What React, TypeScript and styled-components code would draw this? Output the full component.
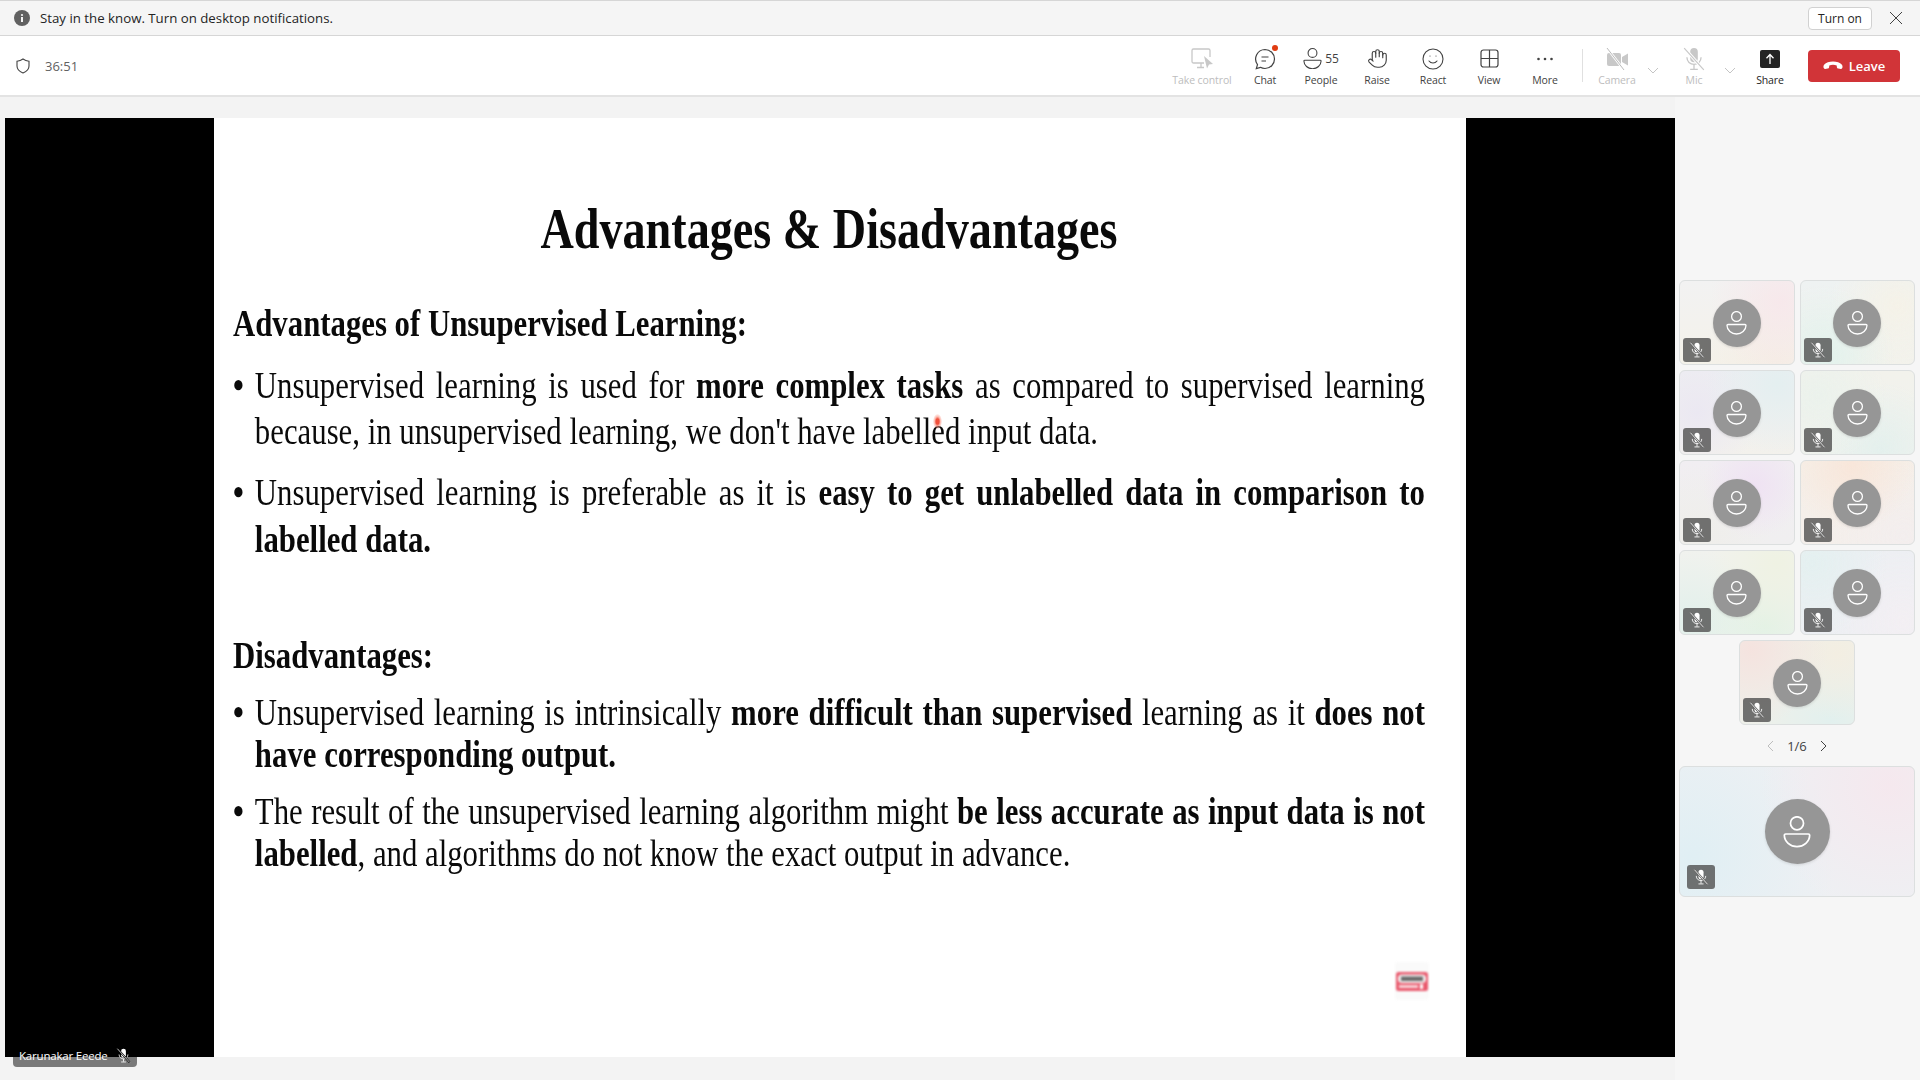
import React from 'react'
import styled, {createGlobalStyle} from 'styled-components'
import {Hand, Smile} from 'lucide-react'

const UI_FONT = `'Open Sans', 'Noto Sans', sans-serif`
const SLIDE_SCALE = 0.81

const GlobalStyle = createGlobalStyle`
  html, body {
    margin: 0;
    padding: 0;
    background: #f3f3f3;
  }
  * {
    box-sizing: border-box;
  }
`

const Page = styled.div`
  width: 1920px;
  height: 1080px;
  overflow: hidden;
  display: flex;
  flex-direction: column;
  background: #f3f3f3;
  font-family: ${UI_FONT};
  color: #242424;
`

const Banner = styled.div`
  height: 36px;
  flex: none;
  display: flex;
  align-items: center;
  padding: 0 17px 0 14px;
  border-top: 1px solid #d6d6d6;
  border-bottom: 1px solid #d6d6d6;
  background: #f5f5f5;
  font-size: 13.25px;
`

const BannerText = styled.span`
  flex: 1;
  margin-left: 10px;
`

const TurnOn = styled.button`
  width: 64px;
  height: 23px;
  padding: 0;
  border: 1px solid #d1d1d1;
  border-radius: 4px;
  background: #fff;
  font-family: ${UI_FONT};
  font-size: 12px;
  color: #242424;
`

const CloseButton = styled.span`
  display: flex;
  margin-left: 17px;
`

const Toolbar = styled.div`
  height: 61px;
  flex: none;
  display: flex;
  align-items: flex-start;
  padding-right: 20px;
  background: #fff;
  border-bottom: 2px solid #e3e3e3;
`

const Timer = styled.div`
  flex: 1;
  height: 59px;
  display: flex;
  align-items: center;
  gap: 14px;
  padding-left: 15px;
  font-size: 13px;
  color: #616161;
`

const Tool = styled.div<{$width?: number; $muted?: boolean}>`
  width: ${p => p.$width ?? 56}px;
  display: flex;
  flex-direction: column;
  align-items: center;
  padding-top: 9px;
  color: ${p => (p.$muted ? '#c4c4c4' : '#424242')};
`

const IconSlot = styled.div`
  height: 27px;
  display: flex;
  align-items: center;
  justify-content: center;
  gap: 3px;
  position: relative;
`

const Count = styled.span`
  font-size: 12px;
  color: #424242;
`

const ToolLabel = styled.span<{$muted?: boolean; $dark?: boolean}>`
  height: 16px;
  line-height: 16px;
  font-size: 10.5px;
  white-space: nowrap;
  letter-spacing: -0.1px;
  color: ${p => (p.$muted ? '#bdbdbd' : p.$dark ? '#242424' : '#424242')};
`

const RedDot = styled.span`
  position: absolute;
  top: 0;
  right: -2px;
  width: 6px;
  height: 6px;
  border-radius: 50%;
  background: #e03c12;
`

const Divider = styled.span`
  width: 1px;
  height: 33px;
  margin: 13px 6px 0 9px;
  background: #e0e0e0;
`

const Caret = styled.span<{$gap?: number}>`
  width: 16px;
  height: 59px;
  display: flex;
  align-items: center;
  justify-content: center;
  padding-top: 8px;
  margin-right: ${p => p.$gap ?? 0}px;
`

const LeaveButton = styled.div`
  width: 92px;
  height: 32px;
  margin: 14px 0 0 10px;
  display: flex;
  align-items: center;
  justify-content: center;
  gap: 6px;
  border-radius: 4px;
  background: #d13438;
  color: #fff;
  font-size: 13px;
  font-weight: 600;
`

const Stage = styled.div`
  flex: 1;
  display: flex;
  padding: 21px 0 0 5px;
`

const Slide = styled.div`
  position: relative;
  width: 1670px;
  height: 939px;
  flex: none;
  display: grid;
  grid-template-columns: 209px 1252px 209px;
  background: #000;
`

const SlideSheet = styled.div`
  position: relative;
  background: #fff;
  padding: 0 41px 0 19px;
  overflow: hidden;
`

const SlideBody = styled.div`
  width: ${1192 / SLIDE_SCALE}px;
  transform: scaleX(${SLIDE_SCALE});
  transform-origin: left top;
  font-family: 'Liberation Serif', 'Times New Roman', serif;
  color: #0a0a0a;
  filter: blur(0.35px);
`

const SlideTitle = styled.h1`
  margin: 0;
  padding-top: 81px;
  line-height: 60px;
  font-size: 57px;
  font-weight: 700;
  text-align: center;
`

const SlideHeading = styled.h2<{$top: number}>`
  margin: ${p => p.$top}px 0 0;
  line-height: 44px;
  font-size: 38px;
  font-weight: 700;
`

const Bullet = styled.div<{$top: number; $pitch: number}>`
  margin-top: ${p => p.$top}px;
  display: grid;
  grid-template-columns: 27px 1fr;
  font-size: 38px;
  line-height: ${p => p.$pitch}px;
`

const BulletDot = styled.span`
  font-weight: 700;
`

const Line = styled.div<{$fill?: boolean}>`
  white-space: nowrap;
  ${p => (p.$fill ? 'text-align: justify; text-align-last: justify; white-space: normal;' : '')}
`

const LaserDot = styled.span`
  position: absolute;
  left: 719px;
  top: 296px;
  width: 9px;
  height: 15px;
  border-radius: 50%;
  background: radial-gradient(ellipse at center, #f0503c 0 25%, rgba(250, 130, 110, 0.55) 45%, rgba(255, 200, 190, 0) 75%);
`

const Watermark = styled.div`
  position: absolute;
  left: 1181px;
  top: 844px;
  width: 34px;
  height: 38px;
  display: flex;
  align-items: center;
  justify-content: center;
  background: #fafafa;
  border-radius: 3px;
  filter: blur(0.8px);
`

const NameTag = styled.div`
  position: absolute;
  left: 8px;
  top: 926px;
  width: 124px;
  height: 23px;
  display: flex;
  align-items: center;
  gap: 8px;
  padding: 0 0 0 6px;
  border-radius: 0 0 4px 4px;
  background: rgba(0, 0, 0, 0.5);
  color: #fff;
  font-size: 11.5px;
  letter-spacing: -0.2px;
  white-space: nowrap;
`

const Sidebar = styled.aside`
  flex: 1;
  margin-top: -21px;
  padding: 183px 0 0 4px;
  background: #f6f6f6;
  height: 983px;
`

const TileGrid = styled.div`
  width: 236px;
  display: grid;
  grid-template-columns: 115.5px 115.5px;
  grid-auto-rows: 85px;
  gap: 5px;
`

const Tile = styled.div<{$bg: string; $wide?: boolean; $center?: boolean}>`
  position: relative;
  width: ${p => (p.$wide ? 236 : 115.5)}px;
  height: ${p => (p.$wide ? 131 : 85)}px;
  display: flex;
  align-items: center;
  justify-content: center;
  border: 1px solid #dcdfdf;
  border-radius: 6px;
  background: ${p => p.$bg};
  ${p => (p.$center ? 'grid-column: 1 / -1; justify-self: center;' : '')}
`

const Avatar = styled.div<{$wide?: boolean}>`
  width: ${p => (p.$wide ? 65 : 48)}px;
  height: ${p => (p.$wide ? 65 : 48)}px;
  display: flex;
  align-items: center;
  justify-content: center;
  border-radius: 50%;
  background: #969696;
  box-shadow: 0 1px 3px rgba(0, 0, 0, 0.12);
`

const MuteBadge = styled.span<{$wide?: boolean}>`
  position: absolute;
  left: ${p => (p.$wide ? 7 : 3)}px;
  bottom: ${p => (p.$wide ? 7 : 2)}px;
  width: 28px;
  height: 24px;
  display: flex;
  align-items: center;
  justify-content: center;
  border-radius: 3px;
  background: rgba(80, 80, 80, 0.8);
`

const Pager = styled.div`
  width: 236px;
  height: 41px;
  display: flex;
  align-items: center;
  justify-content: center;
  gap: 10px;
  font-size: 13px;
  color: #424242;
`

function InfoIcon() {
  return (
    <svg width='16' height='16' viewBox='0 0 16 16'>
      <circle cx='8' cy='8' r='8' fill='#616161' />
      <rect x='7' y='7' width='2' height='5' fill='#f5f5f5' />
      <circle cx='8' cy='5' r='1.1' fill='#f5f5f5' />
    </svg>
  )
}

function ShieldIcon() {
  return (
    <svg width='16' height='16' viewBox='0 0 16 16' fill='none' stroke='#424242' strokeWidth='1.1'>
      <path d='M8 1c1.8 1.3 3.8 2 6 2.2V8c0 3.2-2 5.4-6 7C4 13.4 2 11.200 2 8V3.200C4.200 3 6.200 2.300 8 1z' />
    </svg>
  )
}

function CloseIcon() {
  return (
    <svg width='14' height='14' viewBox='0 0 14 14' stroke='#424242' strokeWidth='1'>
      <path d='M1 1l12 12M13 1L1 13' />
    </svg>
  )
}

function TakeControlIcon() {
  return (
    <svg width='24' height='24' viewBox='0 0 24 24' fill='none' stroke='#c8c8c8' strokeWidth='1.3'>
      <path d='M14 16H3.500A1.500 1.500 0 0 1 2 14.500v-11A1.500 1.500 0 0 1 3.500 2h15A1.500 1.500 0 0 1 20 3.500V10' />
      <path d='M11 16v4M7 20.500h7' />
      <path d='M14 9l9 8-4 .5-2 4z' fill='#c8c8c8' stroke='none' />
    </svg>
  )
}

function ChatIcon() {
  return (
    <svg width='22' height='22' viewBox='0 0 22 22' fill='none' stroke='#424242' strokeWidth='1.2'>
      <path d='M11 1.500a9.500 9.500 0 0 1 0 19c-1.700 0-3.200-.4-4.600-1.200L2.300 20.500l1.200-3.900A9.500 9.500 0 0 1 11 1.500z' />
      <path d='M7.500 9h7M7.500 13h4.500' />
    </svg>
  )
}

function PersonIcon({size = 21, color = '#fff', weight = 1.3}: {size?: number; color?: string; weight?: number}) {
  return (
    <svg width={size} height={(size * 24) / 21} viewBox='0 0 21 24' fill='none' stroke={color} strokeWidth={weight}>
      <circle cx='10.500' cy='5.500' r='4.900' />
      <path d='M2 13.500h17a1 1 0 0 1 1 1c0 4.600-4.500 8.500-9.500 8.500S1 19.100 1 14.500a1 1 0 0 1 1-1z' />
    </svg>
  )
}

function ViewIcon() {
  return (
    <svg width='19' height='19' viewBox='0 0 19 19' fill='none' stroke='#424242' strokeWidth='1.2'>
      <rect x='1' y='1' width='17' height='17' rx='2.500' />
      <path d='M9.500 1v17M1 9.500h17' />
    </svg>
  )
}

function MoreIcon() {
  return (
    <svg width='18' height='4' viewBox='0 0 18 4' fill='#424242'>
      <circle cx='2.500' cy='2' r='1.300' />
      <circle cx='9' cy='2' r='1.300' />
      <circle cx='15.500' cy='2' r='1.300' />
    </svg>
  )
}

function CameraOffIcon() {
  return (
    <svg width='24' height='24' viewBox='0 0 24 24'>
      <rect x='2' y='6' width='14' height='13' rx='2' fill='#c8c8c8' />
      <path d='M17 10l6-3.500v12L17 15z' fill='#c8c8c8' />
      <path d='M2 1l17 22' stroke='#fff' strokeWidth='2.500' />
      <path d='M2 1l17 22' stroke='#bcbcbc' strokeWidth='1' />
    </svg>
  )
}

function MicOffIcon({size = 24, color = '#c8c8c8', cut = '#fff'}: {size?: number; color?: string; cut?: string}) {
  return (
    <svg width={size} height={size} viewBox='0 0 22 22' fill='none'>
      <rect x='7.500' y='1' width='7' height='13' rx='3.500' fill={color} />
      <path d='M4.500 9.500c0 4 3 6.500 6.500 6.500s6.500-2.500 6.500-6.500M11 16v4M7.500 20.500h7' stroke={color} strokeWidth='1.200' />
      <path d='M2 1l18 20' stroke={cut} strokeWidth='2.800' />
      <path d='M2 1l18 20' stroke={color} strokeWidth='1.100' />
    </svg>
  )
}

function ShareIcon() {
  return (
    <svg width='20' height='20' viewBox='0 0 20 20'>
      <rect x='0' y='1' width='20' height='18' rx='2' fill='#242424' />
      <path d='M10 15V6M6.500 9.200L10 5.500l3.500 3.700' stroke='#fff' strokeWidth='1.300' fill='none' />
    </svg>
  )
}

function HangUpIcon() {
  return (
    <svg width='20' height='10' viewBox='0 0 20 10' fill='#fff'>
      <path d='M10 0.500c3.800 0 7 1.200 8.700 3 .8.900 1 2 .7 3.300-.2.800-.8 1.200-1.500 1.100l-2.700-.4c-.8-.1-1.200-.6-1.300-1.300l-.2-1.700C12.600 3.900 11.300 3.700 10 3.700s-2.600.2-3.700.8L6.100 6.200c-.1.700-.5 1.200-1.300 1.300l-2.700.4c-.7.1-1.300-.3-1.500-1.100-.3-1.300-.1-2.400.7-3.300 1.700-1.800 4.900-3 8.700-3z' />
    </svg>
  )
}

function Chevron({dir, color, size = 12}: {dir: 'down' | 'left' | 'right'; color: string; size?: number}) {
  const d = {down: 'M1 4l5 5 5-5', left: 'M8 1L3 6l5 5', right: 'M4 1l5 5-5 5'}[dir]
  return (
    <svg width={size} height={size} viewBox='0 0 12 12' fill='none' stroke={color} strokeWidth='1'>
      <path d={d} />
    </svg>
  )
}

function WatermarkLogo() {
  return (
    <svg width='32' height='19' viewBox='0 0 32 19'>
      <rect x='0' y='0' width='32' height='19' rx='2.500' fill='#e9596d' />
      <rect x='2' y='2.500' width='28' height='8.500' rx='4' fill='#f2f2f2' />
      <rect x='5' y='4.500' width='22' height='4.500' fill='#3c3c3c' opacity='0.75' />
      <rect x='3' y='13' width='19' height='3' fill='#fbdfe2' opacity='0.9' />
      <rect x='24' y='12' width='3' height='5' fill='#fff' />
    </svg>
  )
}

const TONES = [
  'radial-gradient(circle at 88% 25%, #f7e8eb, transparent 60%), radial-gradient(circle at 85% 95%, #f5ede5, transparent 60%), linear-gradient(180deg, #f2f2f2, #f4f2ea)',
  'radial-gradient(circle at 20% 90%, #e2f2ed, transparent 60%), radial-gradient(circle at 85% 30%, #f5f2e8, transparent 60%), linear-gradient(180deg, #eef2f2, #f2f2ec)',
  'radial-gradient(circle at 85% 15%, #e4eff0, transparent 60%), radial-gradient(circle at 15% 50%, #ebe8f2, transparent 60%), linear-gradient(180deg, #eeeef2, #f3f1ec)',
  'radial-gradient(circle at 15% 30%, #ebf2ec, transparent 60%), radial-gradient(circle at 70% 95%, #e4f0ed, transparent 60%), linear-gradient(180deg, #f2f2ec, #f0f2ee)',
  'radial-gradient(circle at 65% 30%, #efe2f3, transparent 55%), radial-gradient(circle at 15% 90%, #efeeea, transparent 60%), linear-gradient(180deg, #f1eef2, #f0eff0)',
  'radial-gradient(circle at 45% 5%, #f8e6da, transparent 65%), radial-gradient(circle at 90% 90%, #f3eeee, transparent 60%), linear-gradient(180deg, #f5efe8, #f4efeb)',
  'radial-gradient(circle at 85% 15%, #eff2e3, transparent 60%), radial-gradient(circle at 75% 90%, #e3f2e5, transparent 60%), radial-gradient(circle at 10% 85%, #e2f0eb, transparent 60%), #f1f2ee',
  'radial-gradient(circle at 10% 15%, #e4f0f0, transparent 60%), radial-gradient(circle at 90% 85%, #f3eff3, transparent 60%), #edeff3',
  'radial-gradient(circle at 10% 10%, #f5e3df, transparent 60%), radial-gradient(circle at 85% 15%, #f3eee2, transparent 55%), radial-gradient(circle at 80% 95%, #e2f0ee, transparent 60%), #eef0ea',
]

const WIDE_TONE =
  'radial-gradient(circle at 90% 15%, #f5e8ee, transparent 55%), radial-gradient(circle at 5% 70%, #e0eff4, transparent 60%), #eef0f3'

function App() {
  return (
    <Page>
      <GlobalStyle />
      <Banner>
        <InfoIcon />
        <BannerText>Stay in the know. Turn on desktop notifications.</BannerText>
        <TurnOn>Turn on</TurnOn>
        <CloseButton>
          <CloseIcon />
        </CloseButton>
      </Banner>

      <Toolbar>
        <Timer>
          <ShieldIcon />
          36:51
        </Timer>
        <Tool $width={70}>
          <IconSlot>
            <TakeControlIcon />
          </IconSlot>
          <ToolLabel $muted>Take control</ToolLabel>
        </Tool>
        <Tool>
          <IconSlot>
            <ChatIcon />
            <RedDot />
          </IconSlot>
          <ToolLabel>Chat</ToolLabel>
        </Tool>
        <Tool>
          <IconSlot>
            <PersonIcon size={19} color='#424242' weight={1.2} />
            <Count>55</Count>
          </IconSlot>
          <ToolLabel>People</ToolLabel>
        </Tool>
        <Tool>
          <IconSlot>
            <Hand size={21} strokeWidth={1.3} />
          </IconSlot>
          <ToolLabel>Raise</ToolLabel>
        </Tool>
        <Tool>
          <IconSlot>
            <Smile size={24} strokeWidth={1.1} />
          </IconSlot>
          <ToolLabel>React</ToolLabel>
        </Tool>
        <Tool>
          <IconSlot>
            <ViewIcon />
          </IconSlot>
          <ToolLabel>View</ToolLabel>
        </Tool>
        <Tool>
          <IconSlot>
            <MoreIcon />
          </IconSlot>
          <ToolLabel>More</ToolLabel>
        </Tool>
        <Divider />
        <Tool $muted>
          <IconSlot>
            <CameraOffIcon />
          </IconSlot>
          <ToolLabel $muted>Camera</ToolLabel>
        </Tool>
        <Caret $gap={5}>
          <Chevron dir='down' color='#c4c4c4' />
        </Caret>
        <Tool $muted>
          <IconSlot>
            <MicOffIcon />
          </IconSlot>
          <ToolLabel $muted>Mic</ToolLabel>
        </Tool>
        <Caret $gap={4}>
          <Chevron dir='down' color='#c4c4c4' />
        </Caret>
        <Tool>
          <IconSlot>
            <ShareIcon />
          </IconSlot>
          <ToolLabel $dark>Share</ToolLabel>
        </Tool>
        <LeaveButton>
          <HangUpIcon />
          Leave
        </LeaveButton>
      </Toolbar>

      <Stage>
        <Slide>
          <span />
          <SlideSheet>
            <SlideBody>
              <SlideTitle>Advantages &amp; Disadvantages</SlideTitle>
              <SlideHeading $top={42}>Advantages of Unsupervised Learning:</SlideHeading>
              <Bullet $top={17} $pitch={46}>
                <BulletDot>•</BulletDot>
                <div>
                  <Line $fill>
                    Unsupervised learning is used for <b>more complex tasks</b> as compared to supervised learning
                  </Line>
                  <Line>because, in unsupervised learning, we don't have labelled input data.</Line>
                </div>
              </Bullet>
              <Bullet $top={15} $pitch={47}>
                <BulletDot>•</BulletDot>
                <div>
                  <Line $fill>
                    Unsupervised learning is preferable as it is <b>easy to get unlabelled data in comparison to</b>
                  </Line>
                  <Line>
                    <b>labelled data.</b>
                  </Line>
                </div>
              </Bullet>
              <SlideHeading $top={70}>Disadvantages:</SlideHeading>
              <Bullet $top={14} $pitch={42}>
                <BulletDot>•</BulletDot>
                <div>
                  <Line $fill>
                    Unsupervised learning is intrinsically <b>more difficult than supervised</b> learning as it{' '}
                    <b>does not</b>
                  </Line>
                  <Line>
                    <b>have corresponding output.</b>
                  </Line>
                </div>
              </Bullet>
              <Bullet $top={15} $pitch={42}>
                <BulletDot>•</BulletDot>
                <div>
                  <Line $fill>
                    The result of the unsupervised learning algorithm might <b>be less accurate as input data is not</b>
                  </Line>
                  <Line>
                    <b>labelled</b>, and algorithms do not know the exact output in advance.
                  </Line>
                </div>
              </Bullet>
            </SlideBody>
            <LaserDot />
            <Watermark>
              <WatermarkLogo />
            </Watermark>
          </SlideSheet>
          <span />
          <NameTag>
            Karunakar Eeede
            <MicOffIcon size={15} color='#fff' cut='#000' />
          </NameTag>
        </Slide>

        <Sidebar>
          <TileGrid>
            {TONES.map((tone, i) => (
              <Tile key={i} $bg={tone} $center={i === TONES.length - 1}>
                <Avatar>
                  <PersonIcon />
                </Avatar>
                <MuteBadge>
                  <MicOffIcon size={16} color='#fff' cut='#666' />
                </MuteBadge>
              </Tile>
            ))}
          </TileGrid>
          <Pager>
            <Chevron dir='left' color='#bdbdbd' />
            1/6
            <Chevron dir='right' color='#424242' />
          </Pager>
          <Tile $bg={WIDE_TONE} $wide>
            <Avatar $wide>
              <PersonIcon size={28} />
            </Avatar>
            <MuteBadge $wide>
              <MicOffIcon size={16} color='#fff' cut='#666' />
            </MuteBadge>
          </Tile>
        </Sidebar>
      </Stage>
    </Page>
  )
}

export default App
